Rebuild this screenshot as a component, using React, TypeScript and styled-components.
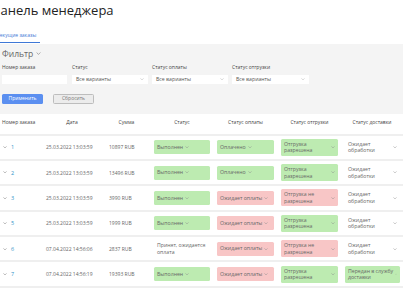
import React from 'react';
import styled, { createGlobalStyle } from 'styled-components';

const Global = createGlobalStyle`
  html, body { margin: 0; padding: 0; background: #fff; overflow: hidden; }
  body { font-family: "Open Sans", "Noto Sans", sans-serif; color: #444; }
  * { box-sizing: border-box; }
`;

const Page = styled.div`
  width: 403px;
  height: 294px;
  overflow: hidden;
`;

const Title = styled.h1`
  margin: 1px 0 0 -9px;
  font-size: 13px;
  line-height: 18px;
  font-weight: 400;
  color: #222;
  white-space: nowrap;
`;

const Tabs = styled.div`
  display: flex;
  margin-top: 13px;
  padding-bottom: 0.5px;
`;

const Tab = styled.div`
  margin-left: -3px;
  padding: 0 4px 3px 0;
  font-size: 5px;
  line-height: 7px;
  color: #3f78d6;
  border-bottom: 1.5px solid #3f78d6;
  white-space: nowrap;
`;

const Panel = styled.section`
  background: #f4f4f4;
  padding: 4px 0 9.5px 2px;
`;

const FilterHead = styled.div`
  display: flex;
  align-items: center;
  gap: 3px;
  font-size: 8.5px;
  line-height: 12px;
  color: #666;
`;

const Fields = styled.div`
  display: flex;
  gap: 4px;
  margin-top: 4.5px;
`;

const Field = styled.div<{ $w: number; $mr?: number }>`
  display: flex;
  flex-direction: column;
  width: ${(p) => p.$w}px;
  margin-right: ${(p) => p.$mr ?? 0}px;
`;

const Label = styled.div`
  font-size: 5px;
  line-height: 7px;
  color: #444;
  white-space: nowrap;
`;

const Input = styled.div`
  margin-top: 3.5px;
  height: 9.5px;
  background: #fff;
`;

const Select = styled.div`
  margin-top: 3.5px;
  height: 9.5px;
  background: #fff;
  display: flex;
  align-items: center;
  justify-content: space-between;
  padding: 0 4px 0 4px;
  font-size: 5.2px;
  color: #555;
`;

const Buttons = styled.div`
  display: flex;
  gap: 10px;
  margin-top: 9.5px;
`;

const Button = styled.button<{ $primary?: boolean }>`
  width: 41px;
  height: 10.5px;
  padding: 0;
  border-radius: 1.5px;
  font-family: inherit;
  font-size: 5px;
  line-height: 1;
  background: ${(p) => (p.$primary ? '#5b8ff0' : '#ececec')};
  color: ${(p) => (p.$primary ? '#fff' : '#777')};
  border: ${(p) => (p.$primary ? 'none' : '0.6px solid #bdbdbd')};
`;

const cols = '42px 60px 49px 62px 65px 63px 62px';

const HeadRow = styled.div`
  display: grid;
  grid-template-columns: ${cols};
  height: 22px;
  padding-top: 5px;
  border-bottom: 2.5px solid #efefef;
`;

const HeadCell = styled.div<{ $left?: boolean }>`
  font-size: 5px;
  line-height: 7px;
  color: #444;
  text-align: ${(p) => (p.$left ? 'left' : 'center')};
  padding-left: ${(p) => (p.$left ? '2px' : '0')};
  white-space: nowrap;
`;

const Row = styled.div`
  display: grid;
  grid-template-columns: ${cols};
  align-items: center;
  height: 25.4px;
  border-bottom: 2px solid #efefef;
`;

const Cell = styled.div<{ $pl?: number; $pr?: number }>`
  padding-left: ${(p) => p.$pl ?? 0}px;
  padding-right: ${(p) => p.$pr ?? 0}px;
  font-size: 5px;
  color: #666;
  white-space: nowrap;
`;

const NumCell = styled.div`
  display: flex;
  align-items: center;
  gap: 4px;
  padding-left: 3px;
`;

const Num = styled.span`
  font-size: 5.5px;
  color: #2f93c8;
`;

type Tone = 'green' | 'red' | 'none';

const toneBg: Record<Tone, string> = {
  green: '#bdebb1',
  red: '#f8c6c6',
  none: 'transparent',
};

const Pill = styled.div<{ $tone: Tone; $wrap?: boolean }>`
  display: flex;
  align-items: center;
  justify-content: ${(p) => (p.$wrap ? 'space-between' : 'flex-start')};
  gap: 2px;
  min-height: ${(p) => (p.$wrap ? 17 : 14)}px;
  padding: 0 3px;
  border-radius: 1.5px;
  background: ${(p) => toneBg[p.$tone]};
  font-size: 5.2px;
  line-height: 6.6px;
  color: #666;
`;

const Lines = styled.span`
  display: flex;
  flex-direction: column;
  white-space: nowrap;
`;

const Chevron = ({ size = 5, color = '#888' }: { size?: number; color?: string }) => (
  <svg width={size} height={size * 0.6} viewBox="0 0 5 3" fill="none">
    <path d="M0.6 0.5 L2.5 2.4 L4.4 0.5" stroke={color} strokeWidth="0.6" />
  </svg>
);

const Status = ({ tone, text }: { tone: Tone; text: string[] }) => {
  const wrap = text.length > 1;
  return (
    <Pill $tone={tone} $wrap={wrap}>
      <Lines>
        {text.map((t) => (
          <span key={t}>{t}</span>
        ))}
      </Lines>
      <Chevron size={4} color="#8a8a8a" />
    </Pill>
  );
};

type Order = {
  id: string;
  date: string;
  sum: string;
  status: [Tone, string[]];
  pay: [Tone, string[]];
  ship: [Tone, string[]];
  delivery: [Tone, string[]];
};

const done: [Tone, string[]] = ['green', ['Выполнен']];
const paid: [Tone, string[]] = ['green', ['Оплачено']];
const waitPay: [Tone, string[]] = ['red', ['Ожидает оплаты']];
const shipOk: [Tone, string[]] = ['green', ['Отгрузка', 'разрешена']];
const shipNo: [Tone, string[]] = ['red', ['Отгрузка не', 'разрешена']];
const waitProc: [Tone, string[]] = ['none', ['Ожидает', 'обработки']];

const orders: Order[] = [
  { id: '1', date: '25.03.2022 13:03:59', sum: '10897 RUB', status: done, pay: paid, ship: shipOk, delivery: waitProc },
  { id: '2', date: '25.03.2022 13:03:59', sum: '13496 RUB', status: done, pay: paid, ship: shipOk, delivery: waitProc },
  { id: '3', date: '25.03.2022 13:03:59', sum: '3990 RUB', status: done, pay: waitPay, ship: shipNo, delivery: waitProc },
  { id: '5', date: '25.03.2022 13:03:59', sum: '1999 RUB', status: done, pay: waitPay, ship: shipOk, delivery: waitProc },
  {
    id: '6',
    date: '07.04.2022 14:56:06',
    sum: '2837 RUB',
    status: ['none', ['Принят, ожидается', 'оплата']],
    pay: waitPay,
    ship: shipNo,
    delivery: waitProc,
  },
  {
    id: '7',
    date: '07.04.2022 14:56:19',
    sum: '19393 RUB',
    status: done,
    pay: waitPay,
    ship: shipOk,
    delivery: ['green', ['Передан в службу', 'доставки']],
  },
];

export default function App() {
  return (
    <Page>
      <Global />
      <Title>Панель менеджера</Title>
      <Tabs>
        <Tab>Текущие заказы</Tab>
      </Tabs>
      <Panel>
        <FilterHead>
          Фильтр <Chevron size={5} color="#777" />
        </FilterHead>
        <Fields>
          <Field $w={65} $mr={1}>
            <Label>Номер заказа</Label>
            <Input />
          </Field>
          <Field $w={76}>
            <Label>Статус</Label>
            <Select>
              Все варианты <Chevron size={4} color="#aaa" />
            </Select>
          </Field>
          <Field $w={76}>
            <Label>Статус оплаты</Label>
            <Select>
              Все варианты <Chevron size={4} color="#aaa" />
            </Select>
          </Field>
          <Field $w={77}>
            <Label>Статус отгрузки</Label>
            <Select>
              Все варианты <Chevron size={4} color="#aaa" />
            </Select>
          </Field>
        </Fields>
        <Buttons>
          <Button $primary>Применить</Button>
          <Button>Сбросить</Button>
        </Buttons>
      </Panel>
      <HeadRow>
        <HeadCell $left>Номер заказа</HeadCell>
        <HeadCell>Дата</HeadCell>
        <HeadCell>Сумма</HeadCell>
        <HeadCell>Статус</HeadCell>
        <HeadCell>Статус оплаты</HeadCell>
        <HeadCell>Статус отгрузки</HeadCell>
        <HeadCell>Статус доставки</HeadCell>
      </HeadRow>
      {orders.map((o) => (
        <Row key={o.id}>
          <NumCell>
            <Chevron size={4} color="#666" />
            <Num>{o.id}</Num>
          </NumCell>
          <Cell $pl={4}>{o.date}</Cell>
          <Cell $pl={7}>{o.sum}</Cell>
          <Cell $pl={3} $pr={3}>
            <Status tone={o.status[0]} text={o.status[1]} />
          </Cell>
          <Cell $pl={4} $pr={4}>
            <Status tone={o.pay[0]} text={o.pay[1]} />
          </Cell>
          <Cell $pl={3} $pr={3}>
            <Status tone={o.ship[0]} text={o.ship[1]} />
          </Cell>
          <Cell $pl={4} $pr={3}>
            <Status tone={o.delivery[0]} text={o.delivery[1]} />
          </Cell>
        </Row>
      ))}
    </Page>
  );
}
